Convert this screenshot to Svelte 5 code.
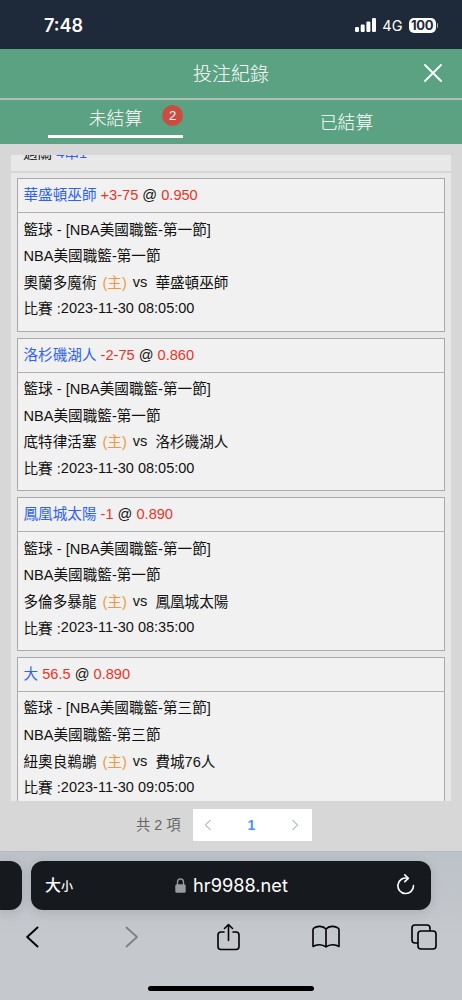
<script lang="ts">
  interface Bet {
    pick: string;
    line: string;
    odds: string;
    league: string;
    home: string;
    away: string;
    time: string;
  }

  // 未結算的過關注單
  const bets: Bet[] = [
    {
      pick: '華盛頓巫師',
      line: '+3-75',
      odds: '0.950',
      league: 'NBA美國職籃-第一節',
      home: '奧蘭多魔術',
      away: '華盛頓巫師',
      time: '2023-11-30 08:05:00'
    },
    {
      pick: '洛杉磯湖人',
      line: '-2-75',
      odds: '0.860',
      league: 'NBA美國職籃-第一節',
      home: '底特律活塞',
      away: '洛杉磯湖人',
      time: '2023-11-30 08:05:00'
    },
    {
      pick: '鳳凰城太陽',
      line: '-1',
      odds: '0.890',
      league: 'NBA美國職籃-第一節',
      home: '多倫多暴龍',
      away: '鳳凰城太陽',
      time: '2023-11-30 08:35:00'
    },
    {
      pick: '大',
      line: '56.5',
      odds: '0.890',
      league: 'NBA美國職籃-第三節',
      home: '紐奧良鵜鶘',
      away: '費城76人',
      time: '2023-11-30 09:05:00'
    }
  ];

  let tab = $state('open');
</script>

<div class="phone">
  <div class="status">
    <span class="clock">7:48</span>
    <div class="signals">
      <svg class="bars" width="22" height="14" viewBox="0 0 22 14" fill="#fff">
        <rect x="0" y="9" width="4" height="5" rx="1.2" />
        <rect x="5.7" y="6.5" width="4" height="7.5" rx="1.2" />
        <rect x="11.4" y="3.4" width="4" height="10.6" rx="1.2" />
        <rect x="17" y="0" width="4" height="14" rx="1.2" />
      </svg>
      <span class="network">4G</span>
      <span class="battery">100</span>
      <span class="battery-tip"></span>
    </div>
  </div>

  <header class="title-bar">
    <h1>投注紀錄</h1>
    <button type="button" class="close" aria-label="關閉">
      <svg width="18" height="18" viewBox="0 0 18 18" fill="none" stroke="#fff" stroke-width="1.8" stroke-linecap="round">
        <path d="M1 1L17 17M17 1L1 17" />
      </svg>
    </button>
  </header>

  <nav class="tabs">
    <button type="button" class="tab" class:active={tab === 'open'} onclick={() => (tab = 'open')}>
      <span class="label">未結算</span>
      <span class="badge">2</span>
    </button>
    <button type="button" class="tab" class:active={tab === 'settled'} onclick={() => (tab = 'settled')}>
      <span class="label">已結算</span>
    </button>
  </nav>

  <main>
    <div class="list">
      <div class="summary"><span>過關</span> <span class="pick">4串1</span></div>
      <div class="cards">
        {#each bets as bet, i (i)}
          <section class="card">
            <div class="card-head">
              <span class="pick">{bet.pick}</span>
              <span class="red">{bet.line}</span> @ <span class="red">{bet.odds}</span>
            </div>
            <div class="card-body">
              <div class="row">籃球 - [{bet.league}]</div>
              <div class="row">{bet.league}</div>
              <div class="row teams">
                <span>{bet.home}</span>
                <span class="host">(主)</span>
                <span class="vs">vs</span>
                <span>{bet.away}</span>
              </div>
              <div class="row when"><span>比賽 :</span><span class="time">{bet.time}</span></div>
            </div>
          </section>
        {/each}
      </div>
    </div>

    <div class="pagination">
      <span class="total">共 2 項</span>
      <div class="pager">
        <svg width="8" height="12" viewBox="0 0 8 12" fill="none" stroke="#bfc3ca" stroke-width="1.3">
          <path d="M6.5 1L1.5 6L6.5 11" />
        </svg>
        <span class="page">1</span>
        <svg width="8" height="12" viewBox="0 0 8 12" fill="none" stroke="#bfc3ca" stroke-width="1.3">
          <path d="M1.5 1L6.5 6L1.5 11" />
        </svg>
      </div>
    </div>
  </main>

  <footer>
    <div class="address-row">
      <div class="prev-tab"></div>
      <div class="address">
        <span class="text-size">大<small>小</small></span>
        <span class="host-name">
          <svg width="11" height="15" viewBox="0 0 11 15">
            <rect x="0.3" y="6.2" width="10.4" height="8.6" rx="1.5" fill="#9b9ca1" />
            <path d="M2.5 7V4a3 3.2 0 0 1 6 0V7" fill="none" stroke="#9b9ca1" stroke-width="1.3" />
          </svg>
          hr9988.net
        </span>
        <svg class="reload" width="18" height="21" viewBox="0 0 18 21" fill="none" stroke="#fff" stroke-width="1.6" stroke-linecap="round" stroke-linejoin="round">
          <path d="M10.6 4.2A7.8 7.8 0 1 0 16.5 11.5" />
          <path d="M7.8 0.9L11.3 4.3L7.8 7.6" />
        </svg>
      </div>
    </div>

    <div class="toolbar">
      <svg width="14" height="22" viewBox="0 0 14 22" fill="none" stroke="#000" stroke-width="1.9" stroke-linecap="round" stroke-linejoin="round">
        <path d="M11.5 1.5L1.2 11L11.5 20.5" />
      </svg>
      <svg width="14" height="22" viewBox="0 0 14 22" fill="none" stroke="#7c7f83" stroke-width="1.7" stroke-linecap="round" stroke-linejoin="round">
        <path d="M2.5 1.5L13 11L2.5 20.5" />
      </svg>
      <svg width="24" height="28" viewBox="0 0 24 28" fill="none" stroke="#000" stroke-width="1.6" stroke-linecap="round" stroke-linejoin="round">
        <path d="M8 9H5Q2 9 2 12V23.5Q2 26.5 5 26.5H20Q23 26.500 23 23.500V12Q23 9 20 9H17" />
        <path d="M12.5 17.5V1.7M8.5 5.5L12.5 1.5L16.5 5.5" />
      </svg>
      <svg width="28" height="24" viewBox="0 0 28 24" fill="none" stroke="#000" stroke-width="1.6" stroke-linecap="round" stroke-linejoin="round">
        <path d="M14 4C11 0.6 5 0.6 1.8 3.2Q1 3.8 1 4.8V21.5C4.5 19 10.5 19 14 22C17.5 19 23.5 19 27 21.5V4.8Q27 3.8 26.2 3.2C23 0.6 17 0.6 14 4V22" />
      </svg>
      <svg width="26" height="26" viewBox="0 0 26 26" fill="none" stroke="#000" stroke-width="1.6">
        <rect x="7" y="7" width="18" height="18" rx="3" />
        <path d="M7 19H4Q1 19 1 16V4Q1 1 4 1H16Q19 1 19 4V7" />
      </svg>
    </div>
    <div class="home-bar"></div>
  </footer>
</div>

<style>
  :global(body) {
    background: #d7d7d7;
  }

  .phone {
    display: flex;
    flex-direction: column;
    width: 462px;
    height: 1000px;
    overflow: hidden;
    font-family: 'Liberation Sans', 'Noto Sans CJK TC', sans-serif;
    color: #111;
  }

  button {
    border: 0;
    padding: 0;
    background: none;
    color: inherit;
    font: inherit;
  }

  svg {
    display: block;
    flex: none;
  }

  .status {
    display: flex;
    justify-content: space-between;
    flex: none;
    box-sizing: border-box;
    height: 49px;
    padding: 2px 24px 0 44px;
    align-items: center;
    background: #1e2a3a;
    color: #fff;
    font-family: Inter, sans-serif;
  }

  .clock {
    font-size: 18px;
    font-weight: 600;
  }

  .signals {
    display: flex;
    align-items: center;
  }

  .bars {
    margin-top: -2px;
  }

  .network {
    margin: 0 6px 0 5px;
    font-size: 14.5px;
  }

  .battery {
    width: 27px;
    height: 15px;
    margin-top: -1px;
    border-radius: 5px;
    background: #fff;
    color: #1e2a3a;
    font-size: 13px;
    font-weight: 700;
    line-height: 15px;
    letter-spacing: -0.3px;
    text-align: center;
  }

  .battery-tip {
    width: 1.5px;
    height: 5px;
    margin-left: 1px;
    border-radius: 0 2px 2px 0;
    background: #a4abb3;
  }

  .title-bar {
    display: grid;
    grid-template-columns: 60px 1fr 60px;
    align-items: center;
    flex: none;
    height: 49px;
    border-bottom: 2px solid #b1bfb7;
    background: #5ba283;
    color: #fff;
  }

  h1 {
    grid-column: 2;
    margin: 2px 0 0;
    font-size: 19px;
    font-weight: 300;
    line-height: 26px;
    text-align: center;
  }

  .close {
    justify-self: center;
    margin: 0 0 2px 2px;
  }

  .tabs {
    display: flex;
    flex: none;
    height: 44px;
    background: #5ba283;
    color: #fff;
    font-size: 17.8px;
    font-weight: 300;
  }

  .tab {
    position: relative;
    flex: 1;
    padding-bottom: 3px;
  }

  .tab.active {
    flex: none;
    box-sizing: border-box;
    width: 135px;
    height: 38px;
    margin: 0 48px;
    padding-bottom: 1px;
    border-bottom: 3px solid #fff;
  }

  .badge {
    position: absolute;
    top: 5px;
    right: 0;
    width: 21px;
    height: 21px;
    border-radius: 50%;
    background: #cb4d42;
    font-size: 13px;
    font-weight: 400;
    line-height: 21px;
    text-align: center;
  }

  main {
    flex: none;
    box-sizing: border-box;
    height: 707px;
    padding: 11px 11px 0;
    background: #d7d7d7;
  }

  .list {
    height: 646px;
    overflow: hidden;
    background: #e8e8e8;
    font-size: 14.6px;
  }

  /* 清單已向下捲動,首列只露出下緣 */
  .summary {
    height: 36px;
    margin-top: -20px;
    padding-left: 12px;
    border-bottom: 2px solid #d7d7d7;
    line-height: 36px;
  }

  .cards {
    display: flex;
    flex-direction: column;
    gap: 6.2px;
    padding: 5.3px 6px 0;
  }

  .card {
    box-sizing: border-box;
    flex: none;
    height: 153.4px;
    border: 1px solid #aaa;
    background: #f1f1f1;
  }

  .card-head {
    height: 33px;
    padding-left: 5.5px;
    border-bottom: 1px solid #b0b0b0;
    line-height: 33.4px;
  }

  .card-body {
    padding: 3.4px 5.5px 0;
  }

  .row {
    height: 26.6px;
    line-height: 27px;
    white-space: nowrap;
  }

  .teams {
    display: flex;
  }

  .pick {
    color: #2f62f0;
  }

  .red {
    color: #ee3126;
  }

  .host {
    margin-left: 6px;
    color: #f2973c;
  }

  .vs {
    margin: -1px 8px 0 6px;
  }

  .when {
    display: flex;
  }

  .time {
    margin-top: -1.4px;
    font-size: 14.5px;
  }

  .pagination {
    display: flex;
    align-items: center;
    height: 32px;
    margin: 7.5px 0 0 125px;
  }

  .total {
    width: 57px;
    color: #666;
    font-size: 14.3px;
    line-height: 18px;
    white-space: nowrap;
  }

  .pager {
    display: flex;
    align-items: center;
    justify-content: space-between;
    box-sizing: border-box;
    width: 119px;
    height: 32px;
    padding: 0 13px 0 11px;
    background: #fff;
  }

  .page {
    color: #4a94f0;
    font-size: 14px;
    font-weight: 700;
  }

  footer {
    display: flex;
    flex: 1;
    flex-direction: column;
    border-top: 1px solid #b7babc;
    background: linear-gradient(#bdc2c8, #c5c8cd 60%);
  }

  .address-row {
    display: flex;
    gap: 9px;
    margin-top: 9px;
  }

  .prev-tab {
    width: 22px;
    height: 49px;
    border-radius: 0 12px 12px 0;
    background: #161a1e;
    box-shadow: 0 2px 12px rgba(0, 0, 0, 0.12);
  }

  .address {
    display: grid;
    grid-template-columns: 1fr auto 1fr;
    align-items: center;
    box-sizing: border-box;
    width: 400px;
    height: 49px;
    padding: 0 16px 0 14px;
    border-radius: 12px;
    background: #161a1e;
    box-shadow: 0 2px 12px rgba(0, 0, 0, 0.12);
    color: #fff;
  }

  .text-size {
    padding-top: 2px;
    font-size: 16px;
    font-weight: 500;
    line-height: 20px;
  }

  .text-size small {
    font-size: 12px;
  }

  .host-name {
    display: flex;
    align-items: center;
    gap: 7px;
    margin: -1px 0 0 3px;
    font-family: Inter, sans-serif;
    font-size: 18.2px;
  }

  .reload {
    justify-self: end;
    margin-top: -2px;
  }

  .toolbar {
    display: grid;
    grid-template-columns: repeat(5, 97.8px);
    place-items: center;
    height: 28px;
    margin: 13px 0 0 -16px;
  }

  .home-bar {
    width: 166px;
    height: 5px;
    margin: auto auto 9px;
    border-radius: 3px;
    background: #000;
  }
</style>
